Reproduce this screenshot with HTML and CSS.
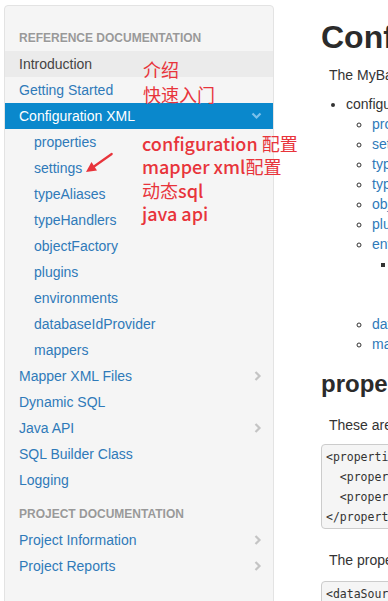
FILE: index.html
```html
<!DOCTYPE html>
<html lang="en">
<head>
<meta charset="utf-8">
<title>MyBatis – Configuration XML</title>
<link rel="stylesheet" href="styles.css">
</head>
<body>
<div class="page">
  <nav class="sidebar">
    <div class="nav-header">Reference Documentation</div>
    <ul class="nav">
      <li class="item selected"><span>Introduction</span></li>
      <li class="item"><span>Getting Started</span></li>
      <li class="item active"><span>Configuration XML</span>
        <svg class="chev" width="11" height="8" viewBox="0 0 11 8"><polyline points="1.5,1.5 5.5,5.5 9.5,1.5" fill="none" stroke="#7cc1ea" stroke-width="2.2"/></svg>
      </li>
      <li class="item sub"><span>properties</span></li>
      <li class="item sub"><span>settings</span></li>
      <li class="item sub"><span>typeAliases</span></li>
      <li class="item sub"><span>typeHandlers</span></li>
      <li class="item sub"><span>objectFactory</span></li>
      <li class="item sub"><span>plugins</span></li>
      <li class="item sub"><span>environments</span></li>
      <li class="item sub"><span>databaseIdProvider</span></li>
      <li class="item sub"><span>mappers</span></li>
      <li class="item"><span>Mapper XML Files</span>
        <svg class="chev" width="8" height="10" viewBox="0 0 8 10"><polyline points="1.5,1 5.5,5 1.5,9" fill="none" stroke="#c4c4c4" stroke-width="2.2"/></svg>
      </li>
      <li class="item"><span>Dynamic SQL</span></li>
      <li class="item"><span>Java API</span>
        <svg class="chev" width="8" height="10" viewBox="0 0 8 10"><polyline points="1.5,1 5.5,5 1.5,9" fill="none" stroke="#c4c4c4" stroke-width="2.2"/></svg>
      </li>
      <li class="item"><span>SQL Builder Class</span></li>
      <li class="item"><span>Logging</span></li>
    </ul>
    <div class="nav-header second">Project Documentation</div>
    <ul class="nav">
      <li class="item"><span>Project Information</span>
        <svg class="chev" width="8" height="10" viewBox="0 0 8 10"><polyline points="1.5,1 5.5,5 1.5,9" fill="none" stroke="#c4c4c4" stroke-width="2.2"/></svg>
      </li>
      <li class="item"><span>Project Reports</span>
        <svg class="chev" width="8" height="10" viewBox="0 0 8 10"><polyline points="1.5,1 5.5,5 1.5,9" fill="none" stroke="#c4c4c4" stroke-width="2.2"/></svg>
      </li>
    </ul>
  </nav>

  <main class="content">
    <h1 class="title">Configuration XML</h1>
    <p class="text">The MyBatis configuration contains settings and properties that have a dramatic effect on how MyBatis behaves.</p>
    <ul class="toc">
      <li>configuration
        <ul class="toc-sub">
          <li><span class="link">properties</span></li>
          <li><span class="link">settings</span></li>
          <li><span class="link">typeAliases</span></li>
          <li><span class="link">typeHandlers</span></li>
          <li><span class="link">objectFactory</span></li>
          <li><span class="link">plugins</span></li>
          <li><span class="link">environments</span>
            <ul class="toc-sub2">
              <li>environment
                <ul class="toc-sub3">
                  <li>transactionManager</li>
                  <li>dataSource</li>
                </ul>
              </li>
            </ul>
          </li>
          <li><span class="link">databaseIdProvider</span></li>
          <li><span class="link">mappers</span></li>
        </ul>
      </li>
    </ul>
    <h2 class="subtitle">properties</h2>
    <p class="text second">These are externalizable, substitutable properties that can be configured in a typical Java Properties file instance.</p>
<pre class="code">&lt;properties resource="org/mybatis/example/config.properties"&gt;
  &lt;property name="username" value="dev_user"/&gt;
  &lt;property name="password" value="F2Fa3!33TYyg"/&gt;
&lt;/properties&gt;</pre>
    <p class="text third">The properties can then be used throughout the configuration files to substitute values that need to be dynamically configured.</p>
<pre class="code">&lt;dataSource type="POOLED"&gt;</pre>
  </main>

  <div class="note note-top">
    <div>介绍</div>
    <div>快速入门</div>
  </div>
  <div class="note note-list">
    <div><b>configuration</b> 配置</div>
    <div><b>mapper xml</b>配置</div>
    <div>动态<b>sql</b></div>
    <div><b>java api</b></div>
  </div>
  <svg class="arrow" width="40" height="30" viewBox="80 148 40 30">
    <line x1="111.7" y1="154" x2="94" y2="166.5" stroke="#e8343b" stroke-width="2.2" stroke-linecap="round"/>
    <polygon points="86,172 97,170.5 91.5,162" fill="#e8343b"/>
  </svg>
</div>
</body>
</html>
```

FILE: styles.css
```css
html, body {
  margin: 0;
  padding: 0;
  overflow: hidden;
  background: #ffffff;
}

body {
  font-family: "Liberation Sans", Arial, sans-serif;
  font-size: 14px;
  color: #333333;
}

.page {
  position: relative;
  display: flex;
  align-items: flex-start;
}

/* ---------- sidebar ---------- */
.sidebar {
  flex: none;
  width: 268px;
  margin: 5px 0 0 4px;
  padding: 19px 0 40px;
  background: #f5f5f5;
  border: 1px solid #e3e3e3;
  border-radius: 4px;
}

.nav-header {
  height: 26px;
  line-height: 26px;
  padding-left: 14px;
  font-size: 12px;
  font-weight: bold;
  color: #999999;
  text-transform: uppercase;
  text-shadow: 0 1px 0 rgba(255, 255, 255, 0.5);
}

.nav-header.second {
  margin-top: 8px;
}

.nav {
  list-style: none;
  margin: 0;
  padding: 0;
}

.item {
  display: flex;
  align-items: center;
  justify-content: space-between;
  height: 26px;
  padding: 0 11px 0 14px;
  color: #2f7ab9;
  font-size: 14px;
}

.item.sub {
  padding-left: 29px;
}

.item.selected {
  background: #ebebeb;
  color: #444444;
}

.item.active {
  background: #0a88cc;
  color: #ffffff;
}

.chev {
  display: block;
  flex: none;
}

/* ---------- content ---------- */
.content {
  flex: none;
  width: 1000px;
  padding-left: 47px;
}

.title {
  margin: 17px 0 8px;
  font-size: 32px;
  line-height: 40px;
  font-weight: bold;
  color: #2b2b2b;
  white-space: nowrap;
}

.text {
  margin: 0 0 9px 8px;
  line-height: 20px;
  white-space: nowrap;
}

.text.second {
  margin-top: 17px;
}

.text.third {
  margin-top: 21px;
  margin-bottom: 11px;
}

.toc {
  margin: 0;
  padding-left: 25px;
  line-height: 20px;
  list-style: disc;
}

.toc-sub {
  margin: 0;
  padding-left: 26px;
  list-style: circle;
}

.toc-sub2 {
  margin: 0;
  padding-left: 24px;
  list-style: square;
}

.toc-sub3 {
  margin: 0;
  padding-left: 24px;
  list-style: disc;
}

.link {
  color: #2f7ab9;
}

.subtitle {
  margin: 16px 0 0;
  font-size: 24px;
  line-height: 28px;
  font-weight: bold;
  color: #2b2b2b;
}

.code {
  margin: 0;
  padding: 2px 4px 1px;
  background: #f5f5f5;
  border: 1px solid #cccccc;
  border-radius: 4px;
  font-family: "DejaVu Sans Mono", "Liberation Mono", monospace;
  font-size: 11.5px;
  line-height: 20px;
  color: #333333;
}

/* ---------- red annotations ---------- */
.note {
  position: absolute;
  font-family: "Noto Sans CJK SC", "Liberation Sans", sans-serif;
  font-size: 18px;
  color: #e8343b;
  white-space: nowrap;
}

.note b {
  font-weight: 500;
}

.note-top {
  left: 143px;
  top: 57px;
  line-height: 25px;
}

.note-list {
  left: 142px;
  top: 132px;
  line-height: 23.4px;
}

.arrow {
  position: absolute;
  left: 80px;
  top: 148px;
}
```
